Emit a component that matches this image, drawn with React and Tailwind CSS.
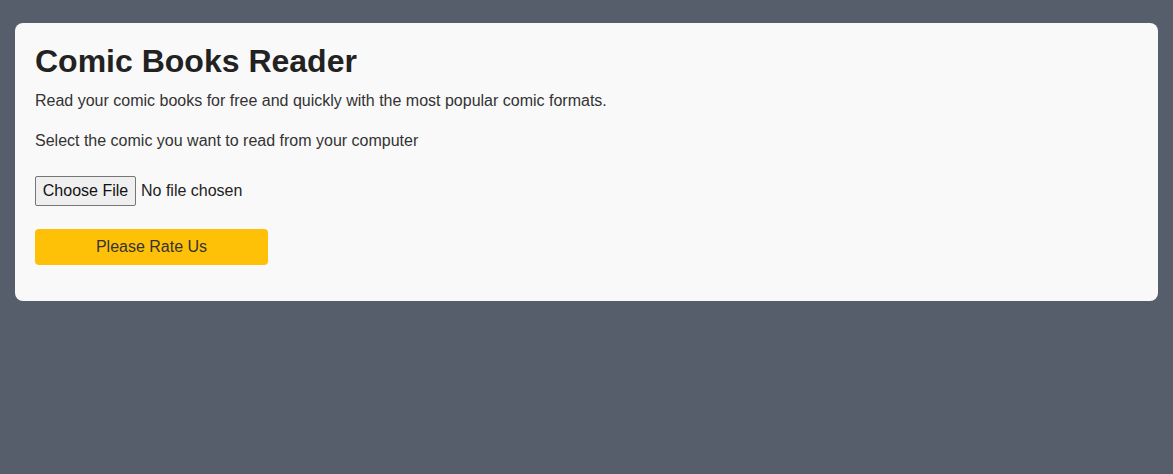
export default function App() {
  return (
    <div className="min-h-[474px] bg-[#565d6b] pt-[23px] px-[15px] font-['Liberation_Sans',Arial,sans-serif]">
      <div className="bg-[#f9f9f9] rounded-[8px] p-[20px] pb-[36px] flex flex-col items-start">
        <h1 className="text-[32px] leading-[37px] font-bold text-[#222]">Comic Books Reader</h1>
        <p className="mt-[12px] text-[16px] leading-[18px] text-[#333]">
          Read your comic books for free and quickly with the most popular comic formats.
        </p>
        <p className="mt-[22px] text-[16px] leading-[18px] text-[#333]">
          Select the comic you want to read from your computer
        </p>
        <label className="mt-[26px] flex items-center text-[16px] text-[#222] cursor-pointer">
          <span className="h-[30px] w-[101px] flex items-center justify-center bg-[#efefef] border border-[#767676] rounded-[2px] text-[#111]">
            Choose File
          </span>
          <span className="ml-[5px]">No file chosen</span>
          <input type="file" className="hidden" />
        </label>
        <button className="mt-[23px] h-[36px] w-[233px] bg-[#ffc107] rounded-[4px] text-[16px] text-[#333] flex items-center justify-center">
          Please Rate Us
        </button>
      </div>
    </div>
  );
}
